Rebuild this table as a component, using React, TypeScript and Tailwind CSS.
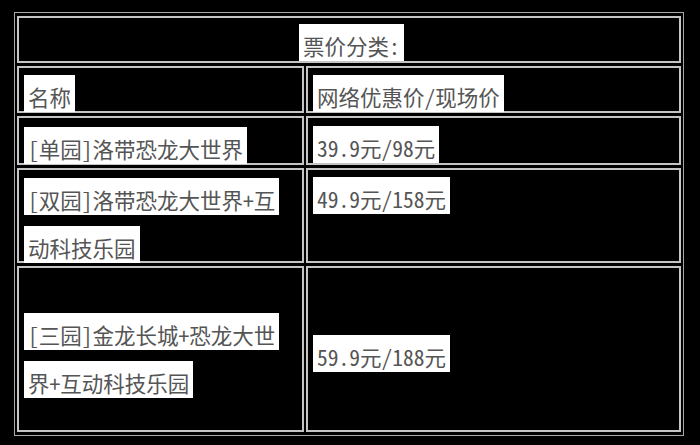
import React from "react";

function Mark({ children }: { children: React.ReactNode }) {
  return <span className="bg-white px-[4px] pt-[6px]">{children}</span>;
}

function Cell({
  className = "",
  children,
}: {
  className?: string;
  children: React.ReactNode;
}) {
  return (
    <div
      className={
        "flex border-2 border-[#c4c4c4] pl-[5px] leading-[48px] " + className
      }
    >
      <div>{children}</div>
    </div>
  );
}

export default function App() {
  return (
    <div className="h-[445px] w-[700px] overflow-hidden bg-black pl-[14px] pt-[12px] font-['Noto_Sans_CJK_SC',sans-serif] text-[21.5px] text-[#555] [font-feature-settings:'hwid']">
      <div className="grid w-[670px] grid-cols-[287px_375px] grid-rows-[47px_47px_49px_95px_166px] gap-x-[2px] gap-y-[3px] border border-[#a8a8a8] px-[2px] py-[3px]">
        <Cell className="col-span-2 items-center justify-center pt-[12px]">
          <Mark>票价分类:</Mark>
        </Cell>

        <Cell className="items-center pt-[15px]">
          <Mark>名称</Mark>
        </Cell>
        <Cell className="items-center pt-[15px]">
          <Mark>网络优惠价/现场价</Mark>
        </Cell>

        <Cell className="items-center pt-[17px]">
          <Mark>[单园]洛带恐龙大世界</Mark>
        </Cell>
        <Cell className="items-center pt-[15px]">
          <Mark>39.9元/98元</Mark>
        </Cell>

        <Cell className="items-center pt-[16px]">
          <Mark>[双园]洛带恐龙大世界+互</Mark>
          <br />
          <Mark>动科技乐园</Mark>
        </Cell>
        <Cell className="items-start pt-[5px]">
          <Mark>49.9元/158元</Mark>
        </Cell>

        <Cell className="items-center pt-[19px]">
          <Mark>[三园]金龙长城+恐龙大世</Mark>
          <br />
          <Mark>界+互动科技乐园</Mark>
        </Cell>
        <Cell className="items-center pt-[16px]">
          <Mark>59.9元/188元</Mark>
        </Cell>
      </div>
    </div>
  );
}
